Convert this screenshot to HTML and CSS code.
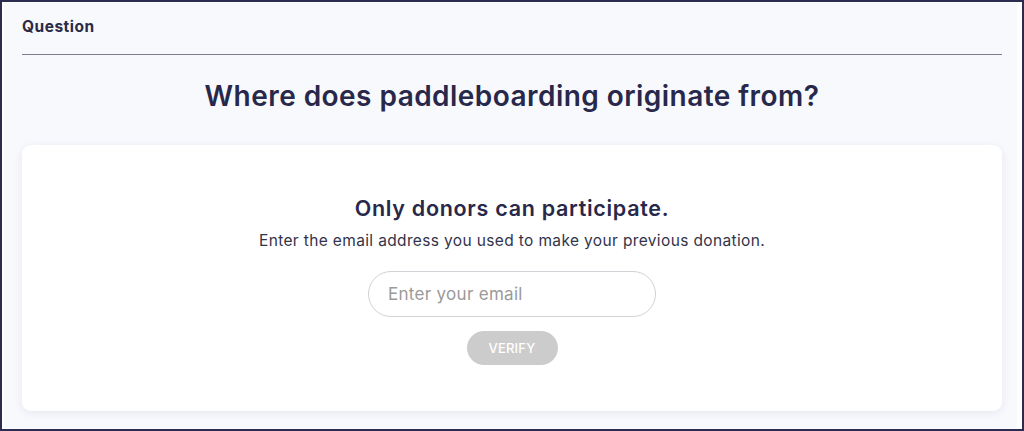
FILE: index.html
```html
<!DOCTYPE html>
<html lang="en">
<head>
<meta charset="utf-8">
<title>Question</title>
<link rel="stylesheet" href="styles.css">
</head>
<body>
<div class="frame">
  <div class="page">
    <div class="section-label">Question</div>
    <hr class="divider">
    <h1 class="question">Where does paddleboarding originate from?</h1>
    <div class="card">
      <h2 class="card-title">Only donors can participate.</h2>
      <p class="card-text">Enter the email address you used to make your previous donation.</p>
      <input class="email" type="email" placeholder="Enter your email">
      <button class="verify" type="button">VERIFY</button>
    </div>
  </div>
</div>
</body>
</html>
```
FILE: styles.css
```css
html, body {
  margin: 0;
  padding: 0;
}
body {
  width: 1024px;
  height: 431px;
  font-family: "Inter", "Lato", sans-serif;
  color: #2a2a4c;
}
.frame {
  box-sizing: border-box;
  width: 1024px;
  height: 431px;
  border: 2px solid #2c2b50;
  background: #ffffff;
  padding: 1px 5px 1px 2px;
}
.page {
  box-sizing: border-box;
  height: 100%;
  background: #f8f9fd;
  padding: 14px 15px 0 18px;
}
.section-label {
  font-size: 15.5px;
  font-weight: 700;
  line-height: 20px;
  letter-spacing: 0.5px;
  color: #2b2b45;
}
.divider {
  border: 0;
  height: 1px;
  background: #7c7f8c;
  margin: 17px 0 0 0;
}
.question {
  margin: 23px 0 0 0;
  text-align: center;
  font-size: 28px;
  line-height: 36px;
  font-weight: 600;
  color: #28284b;
  letter-spacing: 0.45px;
}
.card {
  margin-top: 31px;
  height: 266px;
  box-sizing: border-box;
  background: #ffffff;
  border-radius: 9px;
  box-shadow: 0 2px 10px rgba(40, 40, 80, 0.08);
  display: flex;
  flex-direction: column;
  align-items: center;
  padding-top: 50px;
}
.card-title {
  margin: 0;
  font-size: 21.5px;
  line-height: 26px;
  font-weight: 600;
  color: #28284b;
  letter-spacing: 0.7px;
}
.card-text {
  margin: 10px 0 0 0;
  font-size: 15.5px;
  line-height: 20px;
  letter-spacing: 0.36px;
  color: #33334a;
}
.email {
  margin-top: 20px;
  box-sizing: border-box;
  width: 288px;
  height: 46px;
  border: 1px solid #cfd2d6;
  border-radius: 23px;
  padding: 0 19px;
  font-family: inherit;
  font-size: 17px;
  letter-spacing: 0.3px;
  color: #333;
  background: #fff;
  outline: none;
}
.email::placeholder {
  color: #9a9a9a;
}
.verify {
  margin-top: 14px;
  width: 91px;
  height: 34px;
  border: 0;
  border-radius: 17px;
  background: #cccccc;
  color: #ffffff;
  font-family: inherit;
  font-size: 13px;
  font-weight: 500;
  letter-spacing: 0.2px;
}
```
